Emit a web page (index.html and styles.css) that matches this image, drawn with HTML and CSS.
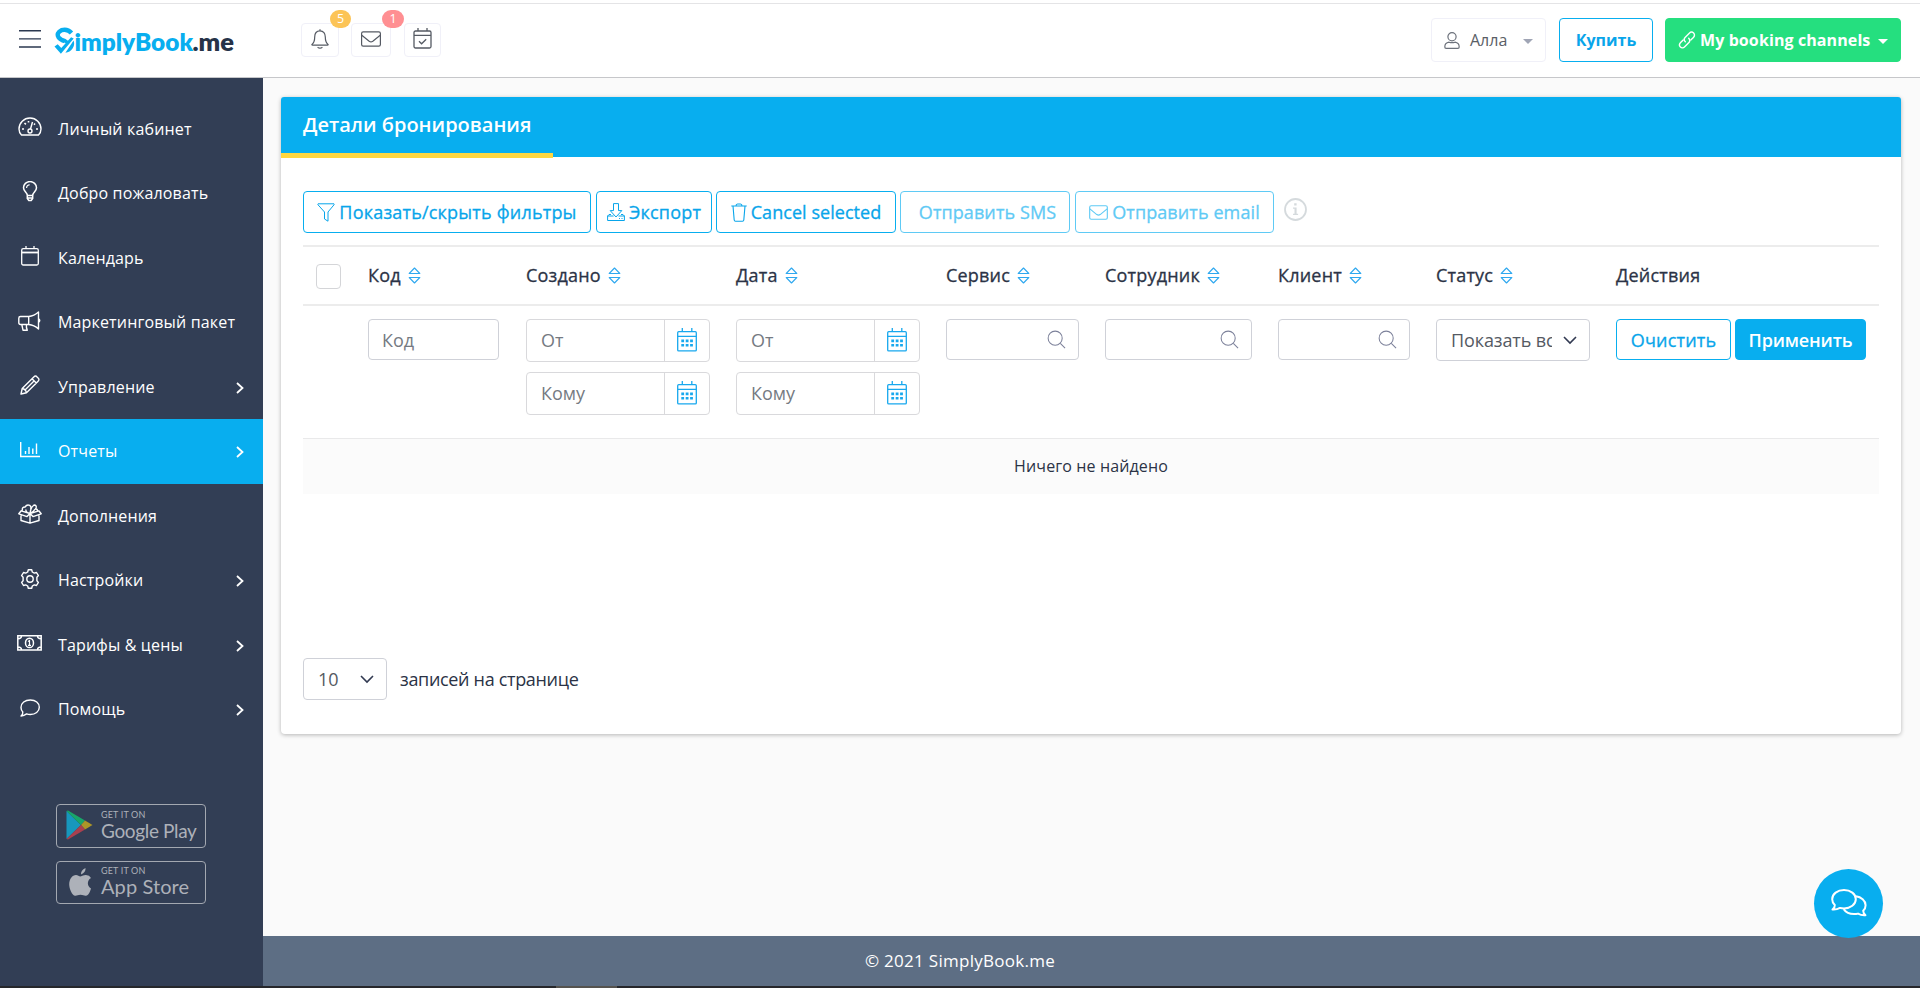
FILE: index.html
```html
<!DOCTYPE html>
<html lang="ru">
<head>
    <meta charset="UTF-8">
    <meta name="viewport" content="width=device-width, initial-scale=1.0">
    <title>SimplyBook.me</title>
    <link rel="stylesheet" href="styles.css">
</head>
<body>

    <svg class="sprite">
        <symbol id="i-right" viewBox="0 0 8 12"><path d="M1 1l5.5 5L1 11" fill="none" stroke="currentColor" stroke-width="1.8"/></symbol>
        <symbol id="i-down" viewBox="0 0 14 9"><path d="M1 1l6 6 6-6" fill="none" stroke="currentColor" stroke-width="1.6"/></symbol>
        <symbol id="i-sort" viewBox="0 0 12 17"><path d="M6 1l5.3 5.5H.7zM6 16l5.3-5.5H.7z" fill="none" stroke="currentColor" stroke-width="1.1" stroke-linejoin="round"/></symbol>
        <symbol id="i-mail" viewBox="0 0 20 16"><g fill="none" stroke="currentColor" stroke-width="1.2"><rect x=".6" y=".8" width="18.8" height="14.4" rx="1.6"/><path d="M.8 4.2l7.4 6q1.8 1.3 3.6 0l7.4-6"/></g></symbol>
        <symbol id="i-search" viewBox="0 0 20 20"><g fill="none" stroke="currentColor" stroke-width="1.1"><circle cx="8.6" cy="8.6" r="7.4"/><path d="M14 14l5 5"/></g></symbol>
        <symbol id="i-cal" viewBox="0 0 20 24"><g fill="none" stroke="currentColor" stroke-width="1.3"><rect x=".7" y="3.7" width="18.6" height="19.2" rx="1"/><path d="M.7 8.4h18.6M5.3 0v4M14.8 0v4"/></g><path fill="currentColor" d="M4.3 11.6h2.8v2.6H4.3zM8.7 11.6h2.8v2.6H8.7zM13.1 11.6h2.8v2.6h-2.8zM4.3 16h2.8v2.6H4.3zM8.7 16h2.8v2.6H8.7zM13.1 16h2.8v2.6h-2.8z"/></symbol>
    </svg>

    <!-- Top bar -->
    <header class="topbar">
        <svg class="burger" viewBox="0 0 22 18"><path d="M0 .8h22M0 8.9h22M0 17h22" stroke="#2b3850" stroke-width="1.4"/></svg>
        <svg class="logo" viewBox="0 0 182 30">
            <path d="M17.5 6Q13.500 1.500 7.500 3.200Q2 6 4.500 10.200Q6.300 12.800 11 14.200Q13 15 12 16.500" fill="none" stroke="#08aeef" stroke-width="4.400"/>
            <path d="M.5 19.500l3.200-2.300 3.600 3.700 9.800-10.600 2.600 1.300L6.900 26.800z" fill="#08aeef"/>
            <path d="M19.600 13.500q1.500 4.500-1.200 8.200-2.400 3.500-7 4z" fill="#08aeef"/>
            <text class="logo-main" x="20.500" y="24" textLength="118.500" lengthAdjust="spacingAndGlyphs">implyBook</text>
            <text class="logo-me" x="138.500" y="24" textLength="41.500" lengthAdjust="spacingAndGlyphs">.me</text>
        </svg>

        <div class="notices">
            <a class="notice notice-bell" href="#">
                <svg width="18" height="20" viewBox="0 0 18 20"><g fill="none" stroke="#555a63" stroke-width="1.2"><path d="M9 .2v1.600M9 1.800C5.500 1.800 3.700 4.400 3.700 8c0 4-1 6-2.700 7.400q-.5.8.6.8h14.800q1.100 0 .6-.8C15.300 14 14.300 12 14.300 8 14.300 4.400 12.500 1.800 9 1.800z"/><path d="M6.600 18.200q2.400 2 4.800 0"/></g></svg>
                <span class="count count-orange">5</span>
            </a>
            <a class="notice notice-mail" href="#">
                <svg width="20" height="16"><use href="#i-mail"/></svg>
                <span class="count count-red">1</span>
            </a>
            <a class="notice notice-cal" href="#">
                <svg width="19" height="21" viewBox="0 0 19 21"><g fill="none" stroke="#555a63" stroke-width="1.300"><rect x="1" y="3" width="17" height="17" rx="1.500"/><path d="M1 7.400h17M5 0v3M14 0v3M6 13.300l2.600 2.500 4.600-4.600"/></g></svg>
            </a>
        </div>

        <a class="top-btn user" href="#">
            <svg width="16" height="17" viewBox="0 0 16 17"><g fill="none" stroke="#6c717b" stroke-width="1.200"><circle cx="8" cy="4.800" r="4.100"/><path d="M5 10.200C2 10.700.8 12.500.8 15q0 1.300 1.300 1.300h11.800q1.300 0 1.300-1.300c0-2.500-1.200-4.300-4.200-4.800-2 .7-4 .7-6 0z"/></g></svg>
            <span>Алла</span>
            <i class="caret"></i>
        </a>
        <a class="top-btn buy" href="#">Купить</a>
        <a class="top-btn channels" href="#">
            <svg width="18" height="18" viewBox="0 0 18 18"><g fill="none" stroke="#fff" stroke-width="1.400" stroke-linecap="round"><path d="M7.300 10.700c-1.500-1.500-1.300-3.200 0-4.500l4-4c1.400-1.400 3.100-1.400 4.300-.2s1.200 3-.2 4.400l-2.600 2.600"/><path d="M10.700 7.300c1.500 1.500 1.300 3.200 0 4.500l-4 4c-1.400 1.400-3.100 1.400-4.300.2s-1.200-3 .2-4.400L5.200 9"/></g></svg>
            <span>My booking channels</span>
            <i class="caret"></i>
        </a>
    </header>

    <div class="wrapper">
        <!-- Sidebar -->
        <aside class="sidebar">
            <nav class="menu">
                <a href="#"><span class="ico"><svg width="24" height="20" viewBox="0 0 24 20"><g fill="none" stroke="#fff" stroke-width="1.400"><path d="M3.500 18Q1 15.500 1 12a11 11 0 0 1 22 0q0 3.500-2.500 6z"/><circle cx="12" cy="14" r="2"/><path d="M12.500 12l2-7"/></g><path d="M4 12h2M18 12h2M6.500 6l1.400 1.400M10.500 4v1.500M17 6.500l-1 1.200" stroke="#fff" stroke-width="1.600"/></svg></span>Личный кабинет</a>
                <a href="#"><span class="ico"><svg width="16" height="21" viewBox="0 0 16 21"><g fill="none" stroke="#fff" stroke-width="1.500"><path d="M5.300 14.500C5.300 11.500 1.500 10.500 1.500 6.800a6.500 6.200 0 0 1 13 0c0 3.700-3.800 4.700-3.800 7.700zM5.300 14.500v3l1.500 2h2.400l1.500-2v-3M5.300 17h5.400"/><path d="M4.500 7Q4.700 4 7.700 3.700" stroke-width="1.100"/></g></svg></span>Добро пожаловать</a>
                <a href="#"><span class="ico"><svg width="18" height="20" viewBox="0 0 18 20"><g fill="none" stroke="#fff" stroke-width="1.300"><rect x=".7" y="2.700" width="16.600" height="16.300" rx="1.500"/><path d="M5 0v3M13 0v3"/><path d="M.7 6.500h16.600" stroke-width="1.800"/></g></svg></span>Календарь</a>
                <a href="#"><span class="ico"><svg width="23" height="20" viewBox="0 0 23 20"><g fill="none" stroke="#fff" stroke-width="1.400" stroke-linejoin="round"><path d="M2.500 5.500h8.200q5.500-.5 9.800-4.500v17q-4.300-4-9.800-4.500H2.500q-1.700 0-1.700-1.700V7.200q0-1.700 1.700-1.700zM10.700 5.500v8M3.800 13.500l1.200 5.700h4.300q-1.300-2.500-.8-5.700M20.500 7.500q2.500 2 0 4"/></g></svg></span>Маркетинговый пакет</a>
                <a href="#"><span class="ico"><svg width="20" height="20" viewBox="0 0 20 20"><g fill="none" stroke="#fff" stroke-width="1.400" stroke-linejoin="round"><path d="M1 19l1.200-5.500L13.800 1.900q1.700-1.700 3.300 0l1 1q1.700 1.600 0 3.300L6.500 17.800zM2.200 13.500q3.500.5 4.300 4.300M5.500 14.500l9-9M12 3.700L16.300 8"/></g></svg></span>Управление<svg class="arrow"><use href="#i-right"/></svg></a>
                <a href="#" class="active"><span class="ico"><svg width="20" height="16" viewBox="0 0 20 16"><path d="M.7 0v14.500H20M5.500 12V9M9 12V5M12.800 12V6.500M16.500 12V1.500" fill="none" stroke="#fff" stroke-width="1.400"/></svg></span>Отчеты<svg class="arrow"><use href="#i-right"/></svg></a>
                <a href="#"><span class="ico"><svg width="24" height="20" viewBox="0 0 24 20"><g fill="none" stroke="#fff" stroke-width="1.400" stroke-linejoin="round"><path d="M3 11.500v5L12 19.200l9-2.700v-5M12 9.500v9.700M12 9.500L3.200 6.800.8 9.800 9 12.600zM12 9.500l8.800-2.700 2.400 3-8.200 2.800zM4.500 6.800Q3.600 3 7 3q2-3 4.700-1.600Q13.600 2.600 12.600 5M12 9.500Q7.800 8.700 7.800 5.500M12 9.500q.5-6 4-8.500 3 .2 2 3-2 3.500-6 5.500M19.500 7q0-2-2-2.200"/></g></svg></span>Дополнения</a>
                <a href="#"><span class="ico"><svg width="20" height="20" viewBox="0 0 20 20"><g fill="none" stroke="#fff" stroke-width="1.400" stroke-linejoin="round"><path d="M8.300.8h3.400l.6 2.200 2 1.100 2.200-.6 1.900 3.100L16.900 8.300v3.400l1.500 1.700-1.900 3.100-2.200-.6-2 1.100-.6 2.200H8.300L7.700 17l-2-1.100-2.200.6-1.900-3.100 1.500-1.700V8.300L1.600 6.600l1.900-3.100 2.200.6 2-1.100z"/><circle cx="10" cy="10" r="3.200"/></g></svg></span>Настройки<svg class="arrow"><use href="#i-right"/></svg></a>
                <a href="#"><span class="ico"><svg width="25" height="16" viewBox="0 0 25 16"><g fill="none" stroke="#fff" stroke-width="1.500"><path d="M.8.800h23.400v14.200H.8zM4.500.8q0 3-3.500 3M20.500.8q0 3 3.500 3M4.500 15q0-3-3.500-3M20.500 15q0-3 3.500-3"/><ellipse cx="12.500" cy="7.900" rx="4" ry="4.700"/><path d="M11 6.500l1.500-1V10M11 10.300h3" stroke-width="1.200"/></g></svg></span>Тарифы &amp; цены<svg class="arrow"><use href="#i-right"/></svg></a>
                <a href="#"><span class="ico"><svg width="20" height="18" viewBox="0 0 20 18"><path d="M1 17q2-1.500 1.800-4Q1 11 1 8.500C1 4 5 1 10.300 1S19.300 4 19.300 8.300s-4 7.200-9 7.200q-2 0-3.700-.6Q4 16.800 1 17z" fill="none" stroke="#fff" stroke-width="1.400" stroke-linejoin="round"/></svg></span>Помощь<svg class="arrow"><use href="#i-right"/></svg></a>
            </nav>

            <div class="stores">
                <a class="store" href="#">
                    <svg width="27" height="30" viewBox="0 0 27 30"><path d="M.5 1v28L15 15z" fill="#1797bd"/><path d="M.5 1L2 .5l17 10L15 15z" fill="#18a66a"/><path d="M19 10.500l7.500 4.500-7.500 4.500-4-4.500z" fill="#ac9628"/><path d="M.5 29l1.500.5 17-10-4-4.500z" fill="#a9404f"/></svg>
                    <span class="store-text"><small>GET IT ON</small><b>Google Play</b></span>
                </a>
                <a class="store store-apple" href="#">
                    <svg width="27" height="30" viewBox="0 0 27 30"><path d="M19.500 1q.5 4-4.500 6.500Q14.700 3 19.500 1zM14.500 9.500c2-.5 3.500-1.700 5.500-1.500q3.500.2 5 3c-4.500 2.500-3.800 8.500 0 10.500-1 3.500-2.500 7-5 7.300-2 .2-3-1-5.500-1s-3.500 1.100-5.300 1C6 28.500 3.200 21.500 3.200 17.500 3.200 12 6.300 8 10 8c1.800 0 3 1.200 4.500 1.500z" fill="#adb1b9"/></svg>
                    <span class="store-text"><small>GET IT ON</small><b>App Store</b></span>
                </a>
            </div>
        </aside>

        <div class="page">
            <main class="content">
                <section class="card">
                    <div class="card-head">
                        <h1>Детали бронирования</h1>
                    </div>
                    <div class="card-body">
                        <div class="toolbar">
                            <button class="btn btn-filter"><svg width="18" height="19" viewBox="0 0 18 19"><path d="M1 .8h16q.5.4 0 1L11 9v9.200L7.500 16V9L1 1.800q-.5-.6 0-1z" fill="none" stroke="currentColor" stroke-width="1"/></svg>Показать/скрыть фильтры</button>
                            <button class="btn btn-export"><svg width="18" height="18" viewBox="0 0 18 18"><g fill="none" stroke="currentColor" stroke-width="1" stroke-linejoin="round"><path d="M6.500.6h5v7h3.300L9 14 3.200 7.600h3.300zM4 11.500H2L.6 13v4.500h16.800V13L16 11.500h-2M.6 13h6M11.500 13h6"/><path d="M12 15.500h1M14.500 15.500h1"/></g></svg>Экспорт</button>
                            <button class="btn btn-cancel"><svg width="16" height="19" viewBox="0 0 16 19"><path d="M.3 3h15.400M5 3q0-2 1.500-2h3Q11 1 11 3M2 3l1.200 14q.1 1.200 1.300 1.200h7q1.200 0 1.300-1.200L14 3" fill="none" stroke="currentColor" stroke-width="1.100"/></svg>Cancel selected</button>
                            <button class="btn btn-sms" disabled>Отправить SMS</button>
                            <button class="btn btn-email" disabled><svg width="19" height="15"><use href="#i-mail"/></svg>Отправить email</button>
                            <svg class="info" viewBox="0 0 23 23"><circle cx="11.500" cy="11.500" r="10.500" fill="none" stroke="#d5dadd" stroke-width="1.800"/><path d="M10.200 5.200h2.400v2.300h-2.400zM9 9.500h3.600v6.300h1.500v1.300H9v-1.300h1.500v-5H9z" fill="#d5dadd"/></svg>
                        </div>

                        <table class="grid">
                            <colgroup>
                                <col class="c-check"><col class="c-code"><col class="c-date"><col class="c-date"><col class="c-service"><col class="c-staff"><col class="c-client"><col class="c-status"><col>
                            </colgroup>
                            <thead>
                                <tr>
                                    <th class="cell-check"><input type="checkbox" class="check"></th>
                                    <th>Код<svg class="sort"><use href="#i-sort"/></svg></th>
                                    <th>Создано<svg class="sort"><use href="#i-sort"/></svg></th>
                                    <th>Дата<svg class="sort"><use href="#i-sort"/></svg></th>
                                    <th>Сервис<svg class="sort"><use href="#i-sort"/></svg></th>
                                    <th>Сотрудник<svg class="sort"><use href="#i-sort"/></svg></th>
                                    <th>Клиент<svg class="sort"><use href="#i-sort"/></svg></th>
                                    <th>Статус<svg class="sort"><use href="#i-sort"/></svg></th>
                                    <th>Действия</th>
                                </tr>
                            </thead>
                            <tbody>
                                <tr class="filters">
                                    <td></td>
                                    <td><input class="field" type="text" placeholder="Код"></td>
                                    <td>
                                        <div class="date"><input type="text" placeholder="От"><span><svg><use href="#i-cal"/></svg></span></div>
                                        <div class="date"><input type="text" placeholder="Кому"><span><svg><use href="#i-cal"/></svg></span></div>
                                    </td>
                                    <td>
                                        <div class="date"><input type="text" placeholder="От"><span><svg><use href="#i-cal"/></svg></span></div>
                                        <div class="date"><input type="text" placeholder="Кому"><span><svg><use href="#i-cal"/></svg></span></div>
                                    </td>
                                    <td><div class="field search"><svg><use href="#i-search"/></svg></div></td>
                                    <td><div class="field search"><svg><use href="#i-search"/></svg></div></td>
                                    <td><div class="field search"><svg><use href="#i-search"/></svg></div></td>
                                    <td><div class="select"><span>Показать все</span><svg><use href="#i-down"/></svg></div></td>
                                    <td><div class="actions"><button class="btn btn-clear">Очистить</button><button class="btn btn-apply">Применить</button></div></td>
                                </tr>
                                <tr class="empty">
                                    <td colspan="9">Ничего не найдено</td>
                                </tr>
                            </tbody>
                        </table>

                        <div class="pager">
                            <div class="select select-count"><span>10</span><svg><use href="#i-down"/></svg></div>
                            <span>записей на странице</span>
                        </div>
                    </div>
                </section>
            </main>
            <footer class="footer">© 2021 SimplyBook.me</footer>
        </div>
    </div>

    <div class="bottom-line"><i></i></div>

    <a class="chat" href="#">
        <svg width="36" height="28" viewBox="0 0 36 28"><g fill="none" stroke="#fff" stroke-width="2" stroke-linejoin="round"><path d="M1.500 20.500q2.500-2 2.300-4.500Q1.200 13.500 1.200 10.200C1.200 5 6.500 1 13 1s11.800 4 11.800 9.200-5.300 9.200-11.800 9.200q-2.200 0-4-.5-3.500 2-7.500 1.600z"/><path d="M25 7.300c5 .7 9.600 4.300 9.600 8.900q0 3.300-2.400 5.500 0 2.500 2.300 4.500-4 .4-7.500-1.600-1.800.500-4 .500-7 0-10.300-5"/></g></svg>
    </a>

</body>
</html>
```
FILE: styles.css
```css
/* General Styles */
* {
    box-sizing: border-box;
}

body {
    margin: 0;
    height: 988px;
    display: flex;
    flex-direction: column;
    overflow: hidden;
    font-family: "Open Sans", "Noto Sans", sans-serif;
    font-size: 16px;
    color: #2b3346;
    background-color: #fafafa;
}

a {
    color: inherit;
    text-decoration: none;
}

svg {
    display: block;
    flex: none;
}

.sprite {
    position: absolute;
    width: 0;
    height: 0;
}

/* Top bar */
.topbar {
    display: flex;
    align-items: flex-start;
    height: 75px;
    margin-top: 3px;
    padding: 0 19px;
    border-top: 1px solid #e4e4e6;
    border-bottom: 1px solid #c6c7ca;
    background-color: #fff;
    box-shadow: 0 -3px 0 #fff;
}

.burger {
    width: 22px;
    height: 18px;
    margin-top: 26px;
}

.logo {
    width: 182px;
    height: 30px;
    margin: 23px 0 0 13px;
}

.logo text {
    font-family: Lato, sans-serif;
    font-size: 24px;
    font-weight: 800;
}

.logo-main {
    fill: #08aeef;
}

.logo-me {
    fill: #263248;
}

.notices {
    display: flex;
    margin: 19px auto 0 65px;
    color: #555a63;
}

.notice {
    position: relative;
    display: flex;
    align-items: center;
    justify-content: center;
    height: 34px;
    border: 1px solid #f0f0f8;
    border-radius: 4px;
}

.notice-bell {
    width: 38px;
    padding-bottom: 3px;
}

.notice-mail {
    width: 40px;
    margin-left: 12px;
    padding-bottom: 3px;
}

.notice-cal {
    width: 37px;
    margin-left: 13px;
    padding-bottom: 3px;
}

.count {
    position: absolute;
    top: -14px;
    right: -13px;
    width: 21px;
    height: 18px;
    border-radius: 9px;
    color: #fff;
    font-size: 12.5px;
    line-height: 17px;
    text-align: center;
}

.count-orange {
    background-color: #fcc457;
}

.count-red {
    right: -14px;
    width: 22px;
    background-color: #ff8f92;
}

.top-btn {
    display: flex;
    align-items: center;
    height: 44px;
    margin-top: 14px;
    border: 1px solid #f0f0f8;
    border-radius: 4px;
}

.caret {
    border: 5px solid transparent;
    border-top-color: currentColor;
    border-bottom: 0;
}

.user {
    width: 115px;
    padding-left: 12px;
    color: #5a5e66;
}

.user span {
    width: 53px;
    margin-left: 10px;
}

.user .caret {
    color: #a0a5b5;
    margin-top: 3px;
}

.buy {
    width: 94px;
    justify-content: center;
    margin-left: 13px;
    border-color: #08aeef;
    color: #08a5ea;
    font-weight: 700;
}

.channels {
    width: 236px;
    margin-left: 12px;
    padding-left: 12px;
    border-color: #25df7f;
    background-color: #25df7f;
    color: #fff;
    font-weight: 700;
}

.channels span {
    width: 172px;
    margin: 0 6px 0 4px;
    letter-spacing: 0.1px;
    white-space: nowrap;
}

.channels .caret {
    margin-top: 3px;
}

/* Sidebar */
.wrapper {
    display: flex;
    height: 908px;
}

.sidebar {
    width: 263px;
    padding-top: 18.5px;
    background-color: #323e55;
    color: #fff;
}

.menu a {
    display: flex;
    align-items: center;
    height: 64.5px;
    padding: 0 19px 0 18px;
    letter-spacing: 0.16px;
    white-space: nowrap;
}

.menu .active {
    background-color: #08aeef;
}

.ico {
    display: flex;
    justify-content: center;
    width: 25px;
    margin: 0 16px 3px -1px;
}

.arrow {
    width: 8px;
    height: 12px;
    margin: 2px 0 0 auto;
}

.stores {
    display: flex;
    flex-direction: column;
    gap: 13px;
    margin: 62px 0 0 56px;
}

.store {
    display: flex;
    align-items: center;
    width: 150px;
    height: 44px;
    padding: 0 0 1px 9px;
    border: 1px solid #a3a8b1;
    border-radius: 4px;
    color: #adb1b9;
}

.store-apple {
    height: 43px;
}

.store-text {
    display: flex;
    flex-direction: column;
    margin-left: 8px;
    font-family: Lato, sans-serif;
}

.store small {
    font-size: 9px;
    line-height: 10px;
    letter-spacing: 0.15px;
}

.store b {
    font-size: 19px;
    font-weight: 400;
    line-height: 21px;
    letter-spacing: -0.35px;
    white-space: nowrap;
}

.store-apple b {
    font-size: 20px;
    letter-spacing: 0.1px;
}

/* Page */
.page {
    flex: 1;
    display: flex;
    flex-direction: column;
}

.content {
    flex: 1;
    padding: 19px 19px 0 18px;
}

.card {
    height: 637px;
    border-radius: 4px;
    background-color: #fff;
    box-shadow: 0 1px 4px rgba(0, 0, 0, 0.28);
}

.card-head {
    display: flex;
    height: 60px;
    border-radius: 3px 3px 0 0;
    background-color: #08aeef;
}

.card-head h1 {
    width: 272px;
    height: 61px;
    margin: 0;
    padding-left: 22px;
    border-bottom: 5px solid #ffd740;
    color: #fff;
    font-size: 20px;
    font-weight: 600;
    line-height: 56px;
    white-space: nowrap;
}

.card-body {
    padding: 34px 22px 0;
}

.toolbar {
    display: flex;
    height: 54px;
}

.btn {
    display: flex;
    align-items: center;
    justify-content: center;
    gap: 4px;
    height: 42px;
    padding: 0;
    border: 1px solid #08aeef;
    border-radius: 4px;
    background-color: #fff;
    color: #08a5ea;
    font-family: inherit;
    font-size: 18px;
    font-weight: 500;
    letter-spacing: 0.2px;
    white-space: nowrap;
    -webkit-text-stroke: 0.3px currentColor;
}

.btn:disabled {
    border-color: #5fcaf5;
    color: #5fcaf5;
}

.btn-filter {
    width: 288px;
}

.btn-export {
    width: 116px;
    margin-left: 5px;
}

.btn-cancel {
    width: 180px;
    margin-left: 4px;
    letter-spacing: 0.05px;
}

.btn-sms {
    width: 170px;
    margin-left: 4px;
    padding-left: 5px;
    letter-spacing: 0.1px;
}

.btn-email {
    width: 199px;
    margin-left: 5px;
    letter-spacing: 0.1px;
}

.info {
    width: 23px;
    height: 23px;
    margin: 7px 0 0 10px;
}

/* Table */
.grid {
    width: 1576px;
    table-layout: fixed;
    border-collapse: separate;
    border-spacing: 0;
}

.c-check { width: 52px; }
.c-code { width: 158px; }
.c-date { width: 210px; }
.c-service { width: 159px; }
.c-staff { width: 173px; }
.c-client { width: 158px; }
.c-status { width: 180px; }

.grid th {
    height: 61px;
    padding: 0 13px 2px;
    border-top: 2px solid #ececec;
    border-bottom: 2px solid #ececec;
    font-size: 18px;
    font-weight: 500;
    letter-spacing: 0.2px;
    text-align: left;
    white-space: nowrap;
    -webkit-text-stroke: 0.3px currentColor;
}

.grid .cell-check {
    padding: 2px 13px 0;
}

.check {
    display: block;
    width: 25px;
    height: 25px;
    margin: 0;
    appearance: none;
    border: 1px solid #d4d5d8;
    border-radius: 4px;
    background-color: #fff;
}

.sort {
    display: inline-block;
    width: 13px;
    height: 17px;
    margin-left: 7px;
    vertical-align: -2px;
    color: #2fa8ef;
}

.filters td {
    height: 132px;
    padding: 13px 13px 0;
    vertical-align: top;
}

.field {
    display: block;
    width: 100%;
    height: 41px;
    padding: 0 13px;
    border: 1px solid #cfd1d8;
    border-radius: 4px;
    font-family: inherit;
    font-size: 18px;
}

input.field {
    width: 131px;
}

input::placeholder {
    color: #757a82;
}

.search {
    display: flex;
    justify-content: flex-end;
    padding: 10px 12px 0 0;
    color: #7c819a;
}

.search svg {
    width: 19px;
    height: 19px;
}

.date {
    display: flex;
    height: 43px;
    margin-bottom: 10px;
    border: 1px solid #d9d9dc;
    border-radius: 4px;
}

.date input {
    width: 138px;
    padding: 0 0 1px 14px;
    border: 0;
    border-right: 1px solid #d9d9dc;
    background: none;
    font-family: inherit;
    font-size: 18px;
}

.date span {
    flex: 1;
    padding: 8px 0 0 12px;
    color: #18a8ee;
}

.date svg {
    width: 20px;
    height: 24px;
}

.select {
    display: flex;
    align-items: center;
    justify-content: space-between;
    height: 42px;
    padding: 0 12px 0 14px;
    border: 1px solid #cfd1d8;
    border-radius: 4px;
    color: #555a63;
    font-size: 18px;
}

.select span {
    width: 101px;
    overflow: hidden;
    letter-spacing: -0.1px;
    white-space: nowrap;
}

.select svg {
    width: 14px;
    height: 9px;
    color: #323a52;
}

.actions {
    display: flex;
    gap: 4px;
}

.actions .btn {
    height: 41px;
}

.btn-clear {
    width: 115px;
}

.btn-apply {
    width: 131px;
    background-color: #08aeef;
    color: #fff;
    font-weight: 600;
    letter-spacing: -0.15px;
    -webkit-text-stroke: 0;
}

.empty td {
    height: 56px;
    padding: 0 0 2px;
    border-top: 1px solid #e9e9ea;
    background-color: #fbfbfb;
    letter-spacing: 0.12px;
    text-align: center;
}

/* Pager */
.pager {
    display: flex;
    align-items: center;
    gap: 13px;
    margin-top: 164px;
    font-size: 18px;
    letter-spacing: -0.32px;
}

.select-count {
    width: 84px;
}

.select-count span {
    width: 30px;
}

/* Footer */
.footer {
    height: 50px;
    padding-left: 602px;
    background-color: #5d6e84;
    color: #fff;
    font-size: 17px;
    font-weight: 500;
    letter-spacing: 0.28px;
    line-height: 50px;
}

.bottom-line {
    height: 2px;
    padding-left: 556px;
    background-color: #26272b;
}

.bottom-line i {
    display: block;
    width: 61px;
    height: 2px;
    background-color: #55534f;
}

/* Chat button */
.chat {
    position: absolute;
    top: 869px;
    left: 1814px;
    display: flex;
    align-items: center;
    justify-content: center;
    width: 69px;
    height: 69px;
    padding-bottom: 1px;
    border-radius: 50%;
    background-color: #08aeef;
}
```
